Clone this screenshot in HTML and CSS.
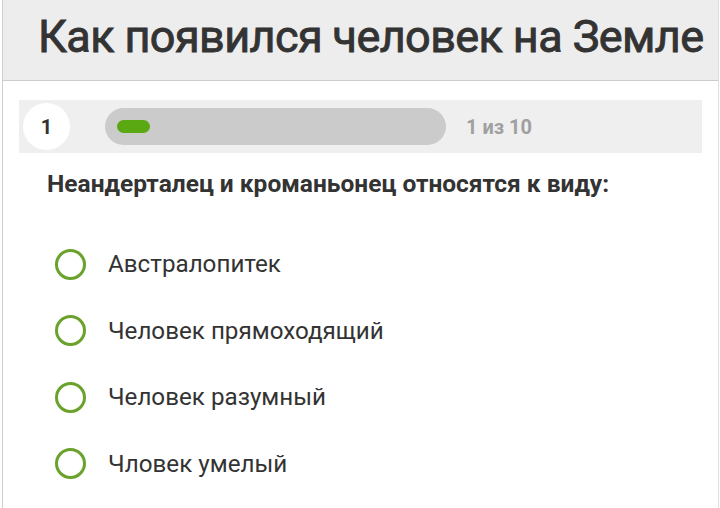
FILE: index.html
```html
<!DOCTYPE html>
<html lang="ru">
<head>
    <meta charset="UTF-8">
    <meta name="viewport" content="width=device-width, initial-scale=1.0">
    <title>Как появился человек на Земле</title>
    <link rel="stylesheet" href="styles.css">
</head>
<body>
    <div class="test-page">
        <div class="test-header">
            <h1>Как появился человек на Земле</h1>
        </div>

        <div class="progress-row">
            <div class="question-num">1</div>
            <div class="progress-bar">
                <div class="progress-fill"></div>
            </div>
            <div class="progress-text">1 из 10</div>
        </div>

        <div class="question">Неандерталец и кроманьонец относятся к виду:</div>

        <ul class="answers">
            <li class="answer"><span class="radio"></span>Австралопитек</li>
            <li class="answer"><span class="radio"></span>Человек прямоходящий</li>
            <li class="answer"><span class="radio"></span>Человек разумный</li>
            <li class="answer"><span class="radio"></span>Чловек умелый</li>
        </ul>
    </div>
</body>
</html>
```

FILE: styles.css
```css
body {
    font-family: Roboto, 'Liberation Sans', sans-serif;
    background-color: #fff;
    margin: 0;
    padding: 0;
    color: #333;
}
.test-page {
    margin: 0 1px 0 2px;
    min-height: 508px;
    border-left: 1px solid #cfcfcf;
    border-right: 1px solid #e0e0e0;
    box-sizing: border-box;
}
.test-header {
    background-color: #ededed;
    height: 80px;
    border-bottom: 1px solid #cccccc;
    display: flex;
    align-items: center;
    padding-left: 35px;
}
h1 {
    margin: 0 0 7px;
    font-size: 45px;
    font-weight: 400;
    letter-spacing: -0.6px;
    color: #333;
    white-space: nowrap;
    -webkit-text-stroke: 0.9px #333;
}
.progress-row {
    display: flex;
    align-items: center;
    margin: 19px 0 0 16px;
    width: 683px;
    height: 53px;
    padding: 0 4px;
    box-sizing: border-box;
    background-color: #efefef;
}
.question-num {
    width: 47px;
    height: 47px;
    border-radius: 50%;
    background: #fff;
    display: flex;
    justify-content: center;
    align-items: center;
    font-size: 20px;
    font-weight: 700;
    color: #333;
}
.progress-bar {
    margin-left: 35px;
    width: 341px;
    height: 37px;
    border-radius: 19px;
    background-color: #cbcbcb;
    display: flex;
    align-items: center;
    padding-left: 12px;
    box-sizing: border-box;
}
.progress-fill {
    width: 33px;
    height: 13px;
    border-radius: 7px;
    background-color: #5aa912;
}
.progress-text {
    margin-left: 20px;
    font-size: 20px;
    font-weight: 700;
    color: #a0a0a0;
}
.question {
    margin: 16px 0 0 44px;
    font-size: 24.5px;
    font-weight: 700;
    color: #333;
}
.answers {
    list-style: none;
    margin: 33px 0 0;
    padding: 0;
}
.answer {
    display: flex;
    align-items: center;
    height: 66.5px;
    padding-left: 52px;
    font-size: 24.2px;
    color: #333;
}
.radio {
    width: 25px;
    height: 25px;
    border: 3px solid #6aa22c;
    border-radius: 50%;
    margin-right: 22px;
    flex-shrink: 0;
}
```
